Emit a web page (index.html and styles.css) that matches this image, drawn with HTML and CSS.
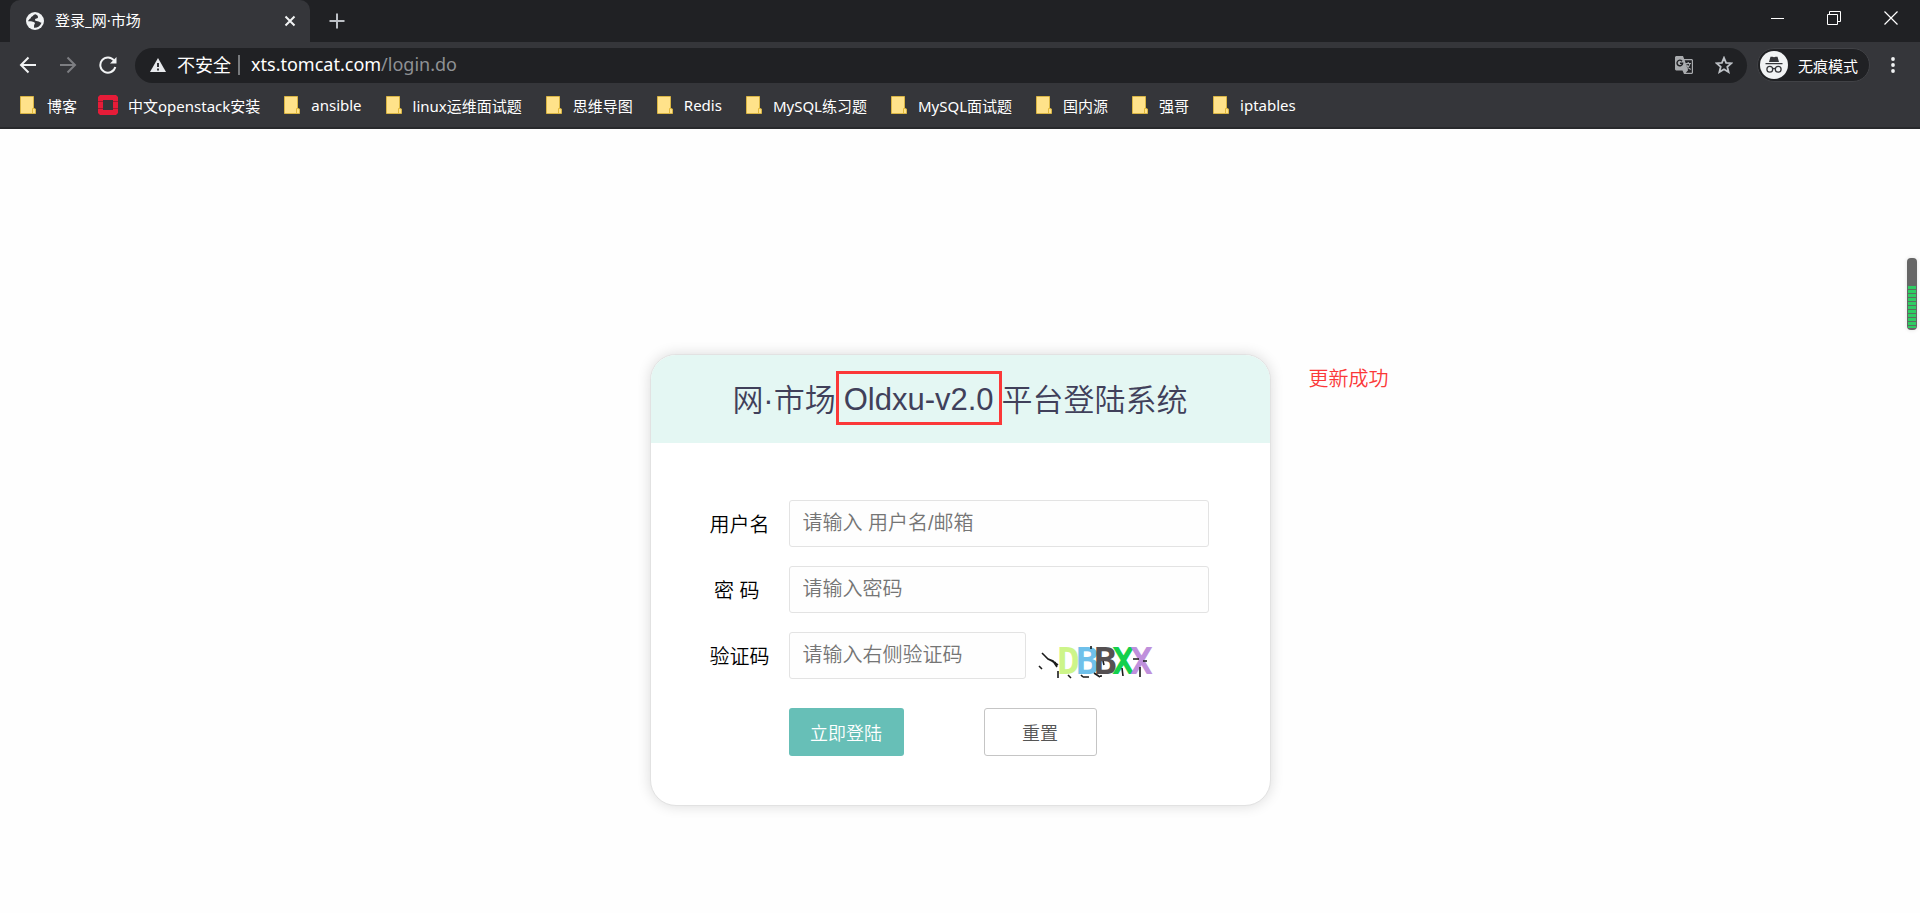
FILE: index.html
```html
<!DOCTYPE html>
<html lang="zh-CN">
<head>
<meta charset="utf-8">
<title>登录_网·市场</title>
<link rel="stylesheet" href="styles.css">
</head>
<body>
<svg class="defs" aria-hidden="true">
  <symbol id="folder" viewBox="0 0 16 18">
    <path d="M.5.5h13v12l2 .5v4.500H.5z" fill="#ffe28a" stroke="#d9b544"/>
    <path d="M12.500 17v-4.500h2" fill="none" stroke="#e3b93a"/>
  </symbol>
</svg>
<header class="browser">
  <div class="tabstrip">
    <div class="tab">
      <svg class="favicon" viewBox="0 0 18 18"><circle cx="9" cy="9" r="9" fill="#f1f3f4"/><path d="M9.500 2.200C7 2.600 7.500 4 6 4.500c-1.500.6-.8 2-2.200 2.300L2 9c1.500.8 3.500.2 5 .8 1.800.7 2.500 1.200 1.500 2.500-.8 1-.2 2-.5 3.500 3.500.2 6.500-1.800 7.500-5-1.500-.3-2.200-1.600-4-1.600-1.500 0-2.800-.4-2.500-1.700.4-1.500 2.500-.5 3-2 .3-1-.5-2.500-2.500-3.300z" fill="#35363a"/></svg>
      <span class="tab-title">登录_网·市场</span>
      <button class="icon-btn" aria-label="关闭标签页"><svg width="12" height="12" viewBox="0 0 12 12"><path d="M1.500 1.500l9 9M10.500 1.500l-9 9" stroke="#f1f3f4" stroke-width="2"/></svg></button>
    </div>
    <button class="icon-btn new-tab" aria-label="新标签页"><svg width="16" height="16" viewBox="0 0 16 16"><path d="M8 .5v15M.5 8h15" stroke="#bdc1c6" stroke-width="2"/></svg></button>
    <div class="window-controls">
      <button class="icon-btn" aria-label="最小化"><svg width="14" height="14" viewBox="0 0 14 14"><path d="M1 7.500h13" stroke="#fff"/></svg></button>
      <button class="icon-btn" aria-label="还原"><svg width="14" height="14" viewBox="0 0 14 14"><path d="M.5 3.500h10v10H.5zM2.500 3V.5h11v10H11" fill="none" stroke="#fff"/></svg></button>
      <button class="icon-btn" aria-label="关闭"><svg width="14" height="14" viewBox="0 0 14 14"><path d="M.5.500l13 13M13.500.500l-13 13" stroke="#fff" stroke-width="1.200"/></svg></button>
    </div>
  </div>
  <div class="toolbar">
    <button class="icon-btn" aria-label="后退"><svg width="18" height="18" viewBox="0 0 18 18"><path d="M17 9H2M9.500 1.500L2 9l7.500 7.500" fill="none" stroke="#f1f3f4" stroke-width="2"/></svg></button>
    <button class="icon-btn" aria-label="前进"><svg width="18" height="18" viewBox="0 0 18 18"><path d="M1 9h15M8.500 1.500L16 9l-7.500 7.500" fill="none" stroke="#7d7e82" stroke-width="2"/></svg></button>
    <button class="icon-btn" aria-label="重新加载"><svg width="18" height="18" viewBox="0 0 18 18"><path d="M15 4.500A7.600 7.600 0 1 0 16.300 11" fill="none" stroke="#f1f3f4" stroke-width="2"/><path d="M17.500 1v6.500h-6.500z" fill="#f1f3f4"/></svg></button>
    <div class="omnibox">
      <svg width="16" height="14" viewBox="0 0 16 14"><path d="M8 0l8 14H0z" fill="#e8eaed"/><path d="M8 5v4M8 10.500v2" stroke="#202124" stroke-width="1.800"/></svg>
      <span class="security">不安全</span>
      <span class="url">xts.tomcat.com<span class="path">/login.do</span></span>
      <button class="icon-btn" aria-label="翻译此页"><svg width="18" height="18" viewBox="0 0 18 18"><path d="M1 0h7l1.200 3H17l1 1v13l-1 1H9l-1.500-3.500H1l-1-1V1z" fill="#a9abae"/><path d="M9.700 4.200h7.100v12.600h-6l2.300-2.500z" fill="#202124"/><path d="M7 5.200A2.800 2.800 0 1 0 7.600 7.300H5" fill="none" stroke="#202124" stroke-width="1.400"/><path d="M10.300 7.500H16M13.200 6v1.500M15 7.500c-.5 2.500-2 4.500-4 5.800M11.500 8.500c.7 2 2.200 4 4.200 5" fill="none" stroke="#a9abae" stroke-width="1.200"/></svg></button>
      <button class="icon-btn" aria-label="添加书签"><svg width="18" height="18" viewBox="0 0 18 18"><path d="M9 1.800l2.100 5 5.300.4-4.100 3.500 1.300 5.300L9 13.200 4.400 16l1.300-5.300-4.100-3.500 5.300-.4z" fill="none" stroke="#bdc1c6" stroke-width="1.800"/></svg></button>
    </div>
    <div class="incognito">
      <svg width="28" height="28" viewBox="0 0 28 28"><circle cx="14" cy="14" r="14" fill="#f1f3f4"/><path d="M9 11l1.500-5.300h2l1.500.6 1.500-.6h2L19 11zM5.500 12h17v1.200h-17z" fill="#35363a"/><circle cx="9.800" cy="18.200" r="2.900" fill="none" stroke="#35363a" stroke-width="1.300"/><circle cx="18.200" cy="18.200" r="2.900" fill="none" stroke="#35363a" stroke-width="1.300"/><path d="M12.500 18q1.500-1.300 3 0" fill="none" stroke="#35363a" stroke-width="1.200"/></svg>
      <span>无痕模式</span>
    </div>
    <button class="icon-btn menu" aria-label="菜单"><svg width="4" height="16" viewBox="0 0 4 16"><circle cx="2" cy="2" r="1.900" fill="#f1f3f4"/><circle cx="2" cy="8" r="1.900" fill="#f1f3f4"/><circle cx="2" cy="14" r="1.900" fill="#f1f3f4"/></svg></button>
  </div>
  <nav class="bookmarks">
    <a href="#"><svg><use href="#folder"/></svg>博客</a>
    <a class="stack" href="#"><svg viewBox="0 0 20 20"><path d="M2 0h16l2 2v4h-5V5H5v1H0V2zM0 7h5v6H0zM15 7h5v6h-5zM0 14h5v1h10v-1h5v4l-2 2H2l-2-2z" fill="#e61c38"/><path d="M0 6.500h5M15 6.500h5M0 13.500h5M15 13.500h5" stroke="#a3182c"/></svg>中文openstack安装</a>
    <a href="#"><svg><use href="#folder"/></svg>ansible</a>
    <a href="#"><svg><use href="#folder"/></svg>linux运维面试题</a>
    <a href="#"><svg><use href="#folder"/></svg>思维导图</a>
    <a href="#"><svg><use href="#folder"/></svg>Redis</a>
    <a href="#"><svg><use href="#folder"/></svg>MySQL练习题</a>
    <a href="#"><svg><use href="#folder"/></svg>MySQL面试题</a>
    <a href="#"><svg><use href="#folder"/></svg>国内源</a>
    <a href="#"><svg><use href="#folder"/></svg>强哥</a>
    <a href="#"><svg><use href="#folder"/></svg>iptables</a>
  </nav>
</header>
<main class="page">
  <section class="card">
    <h1 class="card-title">网·市场<span class="version">Oldxu-v2.0</span>平台登陆系统</h1>
    <form class="form">
      <label for="user">用户名</label>
      <input id="user" type="text" placeholder="请输入 用户名/邮箱">
      <label for="pass">密 码&nbsp;</label>
      <input id="pass" type="password" placeholder="请输入密码">
      <label for="code">验证码</label>
      <div class="code-row">
        <input id="code" type="text" placeholder="请输入右侧验证码">
        <svg class="captcha" viewBox="0 0 120 48" role="img" aria-label="验证码图片">
          <text class="captcha-text" y="43"><tspan x="19" fill="#cdf58a">D</tspan><tspan x="38" fill="#6fc0ea">B</tspan><tspan x="56" fill="#555052">B</tspan><tspan x="74" fill="#14d04c">X</tspan><tspan x="92" fill="#bf90dc">X</tspan></text>
          <path d="M4 22l3 3 3 3 5 2 4 6M10 28l8 4M14 30l6 4M1 35l3 3M20 40v7M30 44l3 3M45 46h6M43 44l2 2M56 42l6 4M63 44v2M53 15v3M65 30l1 4M84 37l1 8M102 36v10M95 28h6M105 30h4" fill="none" stroke="#1b1b1b" stroke-width="1.600"/>
        </svg>
      </div>
      <div class="actions">
        <button class="btn primary" type="submit">立即登陆</button>
        <button class="btn secondary" type="reset">重置</button>
      </div>
    </form>
    <p class="note">更新成功</p>
  </section>
  <div class="meter"><div class="meter-level"></div></div>
</main>
</body>
</html>
```
FILE: styles.css
```css
* { box-sizing: border-box; }
body {
  margin: 0;
  min-height: 100vh;
  display: flex;
  flex-direction: column;
  background: #fefefe;
  font-family: "Liberation Sans", "Noto Sans CJK SC", sans-serif;
  font-weight: 350;
}
button, input { font: inherit; }
svg { display: block; flex: none; }
.defs { position: absolute; width: 0; height: 0; }
.icon-btn { display: grid; place-items: center; padding: 0; border: 0; background: none; }

.browser {
  background: #35363a;
  color: #fff;
  border-bottom: 2px solid #28292c;
  font-family: "Noto Sans", "Noto Sans CJK SC", sans-serif;
  font-size: 15px;
  font-weight: 400;
}
.tabstrip { display: flex; height: 42px; padding-left: 10px; background: #202124; }
.tab {
  display: flex;
  align-items: center;
  gap: 11px;
  width: 300px;
  padding: 0 14px 0 16px;
  border-radius: 10px 10px 0 0;
  background: #35363a;
}
.favicon { width: 18px; height: 18px; }
.tab-title { flex: 1; line-height: 20px; padding-bottom: 2px; }
.new-tab { margin-left: 19px; }
.window-controls { display: flex; align-items: center; gap: 43px; height: 36px; margin-left: auto; padding-right: 22px; }

.toolbar { display: flex; align-items: center; height: 46px; padding: 0 25px 0 19px; }
.toolbar > .icon-btn { width: 18px; margin-right: 22px; }
.toolbar > .menu { width: 4px; margin: 0 0 0 21px; }
.omnibox {
  display: flex;
  flex: 1;
  align-items: center;
  height: 35px;
  margin-left: -4px;
  padding: 0 14px 0 15px;
  border-radius: 18px;
  background: #202124;
  font-size: 18px;
}
.security { margin-left: 11px; padding-right: 7px; border-right: 2px solid #77797c; line-height: 20px; }
.url { flex: 1; margin-left: 11px; line-height: 20px; padding-bottom: 2px; }
.path { color: #8f9194; }
.omnibox .icon-btn { margin-left: 22px; }
.incognito {
  display: flex;
  align-items: center;
  gap: 10px;
  height: 34px;
  margin-left: 10px;
  padding: 0 11px 0 2px;
  border: 1px solid #414246;
  border-radius: 17px;
  background: #202124;
}

.bookmarks { display: flex; gap: 24px; height: 39px; padding: 0 20px; overflow: hidden; }
.bookmarks a { display: flex; align-items: center; gap: 11px; height: 34px; color: #fff; text-decoration: none; white-space: nowrap; }
.bookmarks svg { width: 16px; height: 18px; }
.bookmarks .stack { margin-left: -3px; gap: 10px; }
.bookmarks .stack svg { width: 20px; height: 20px; }

.page { position: relative; flex: 1; display: flex; justify-content: center; align-items: flex-start; padding: 225px 20px 60px; }
.card {
  position: relative;
  width: 621px;
  border: 1px solid #e2e2e2;
  border-radius: 26px;
  background: #fff;
  box-shadow: 0 0 14px rgba(0, 0, 0, 0.14);
}
.card-title {
  display: flex;
  justify-content: center;
  align-items: center;
  height: 88px;
  margin: 0;
  padding-bottom: 3px;
  border-radius: 25px 25px 0 0;
  background: #e4f7f3;
  color: #40405a;
  font-size: 31px;
  font-weight: 350;
}
.version { height: 54px; padding: 0 5px; border: 3px solid #fb3838; line-height: 52px; }
.form {
  display: grid;
  grid-template-columns: 60px 1fr;
  align-items: center;
  gap: 19px;
  padding: 57px 61px 49px 59px;
  font-size: 20px;
}
.form label { text-align: center; white-space: nowrap; }
.form input {
  width: 100%;
  height: 47px;
  padding: 0 13px;
  border: 1px solid #e3e3e3;
  border-radius: 3px;
  background: #fefefe;
}
.form input::placeholder { color: #757575; }
.code-row { display: flex; gap: 12px; }
.code-row input { width: 237px; }
.captcha { width: 120px; height: 48px; margin-top: -1px; overflow: visible; }
.captcha-text { font-family: "DejaVu Sans Mono", monospace; font-size: 38px; font-weight: 700; }
.actions { grid-column: 2; display: flex; gap: 80px; margin-top: 10px; }
.btn { height: 48px; border-radius: 3px; font-size: 18px; }
.primary { width: 115px; border: 0; background: #67bfb7; color: #fff; }
.secondary { width: 113px; border: 1px solid #c5c5c5; background: #fff; color: #555; }
.note { position: absolute; top: 8px; left: calc(100% + 39px); margin: 0; color: #fb3838; font-size: 20px; white-space: nowrap; }

.meter {
  position: absolute;
  top: 129px;
  right: 3px;
  display: flex;
  align-items: flex-end;
  width: 10px;
  height: 72px;
  padding: 2px 1px;
  border-radius: 4px;
  background: #666;
  box-shadow: 0 0 4px rgba(0, 0, 0, 0.12);
}
.meter-level { width: 100%; height: 42px; background: repeating-linear-gradient(#2ecc62 0 3px, #5d6b60 3px 4px); }
```
